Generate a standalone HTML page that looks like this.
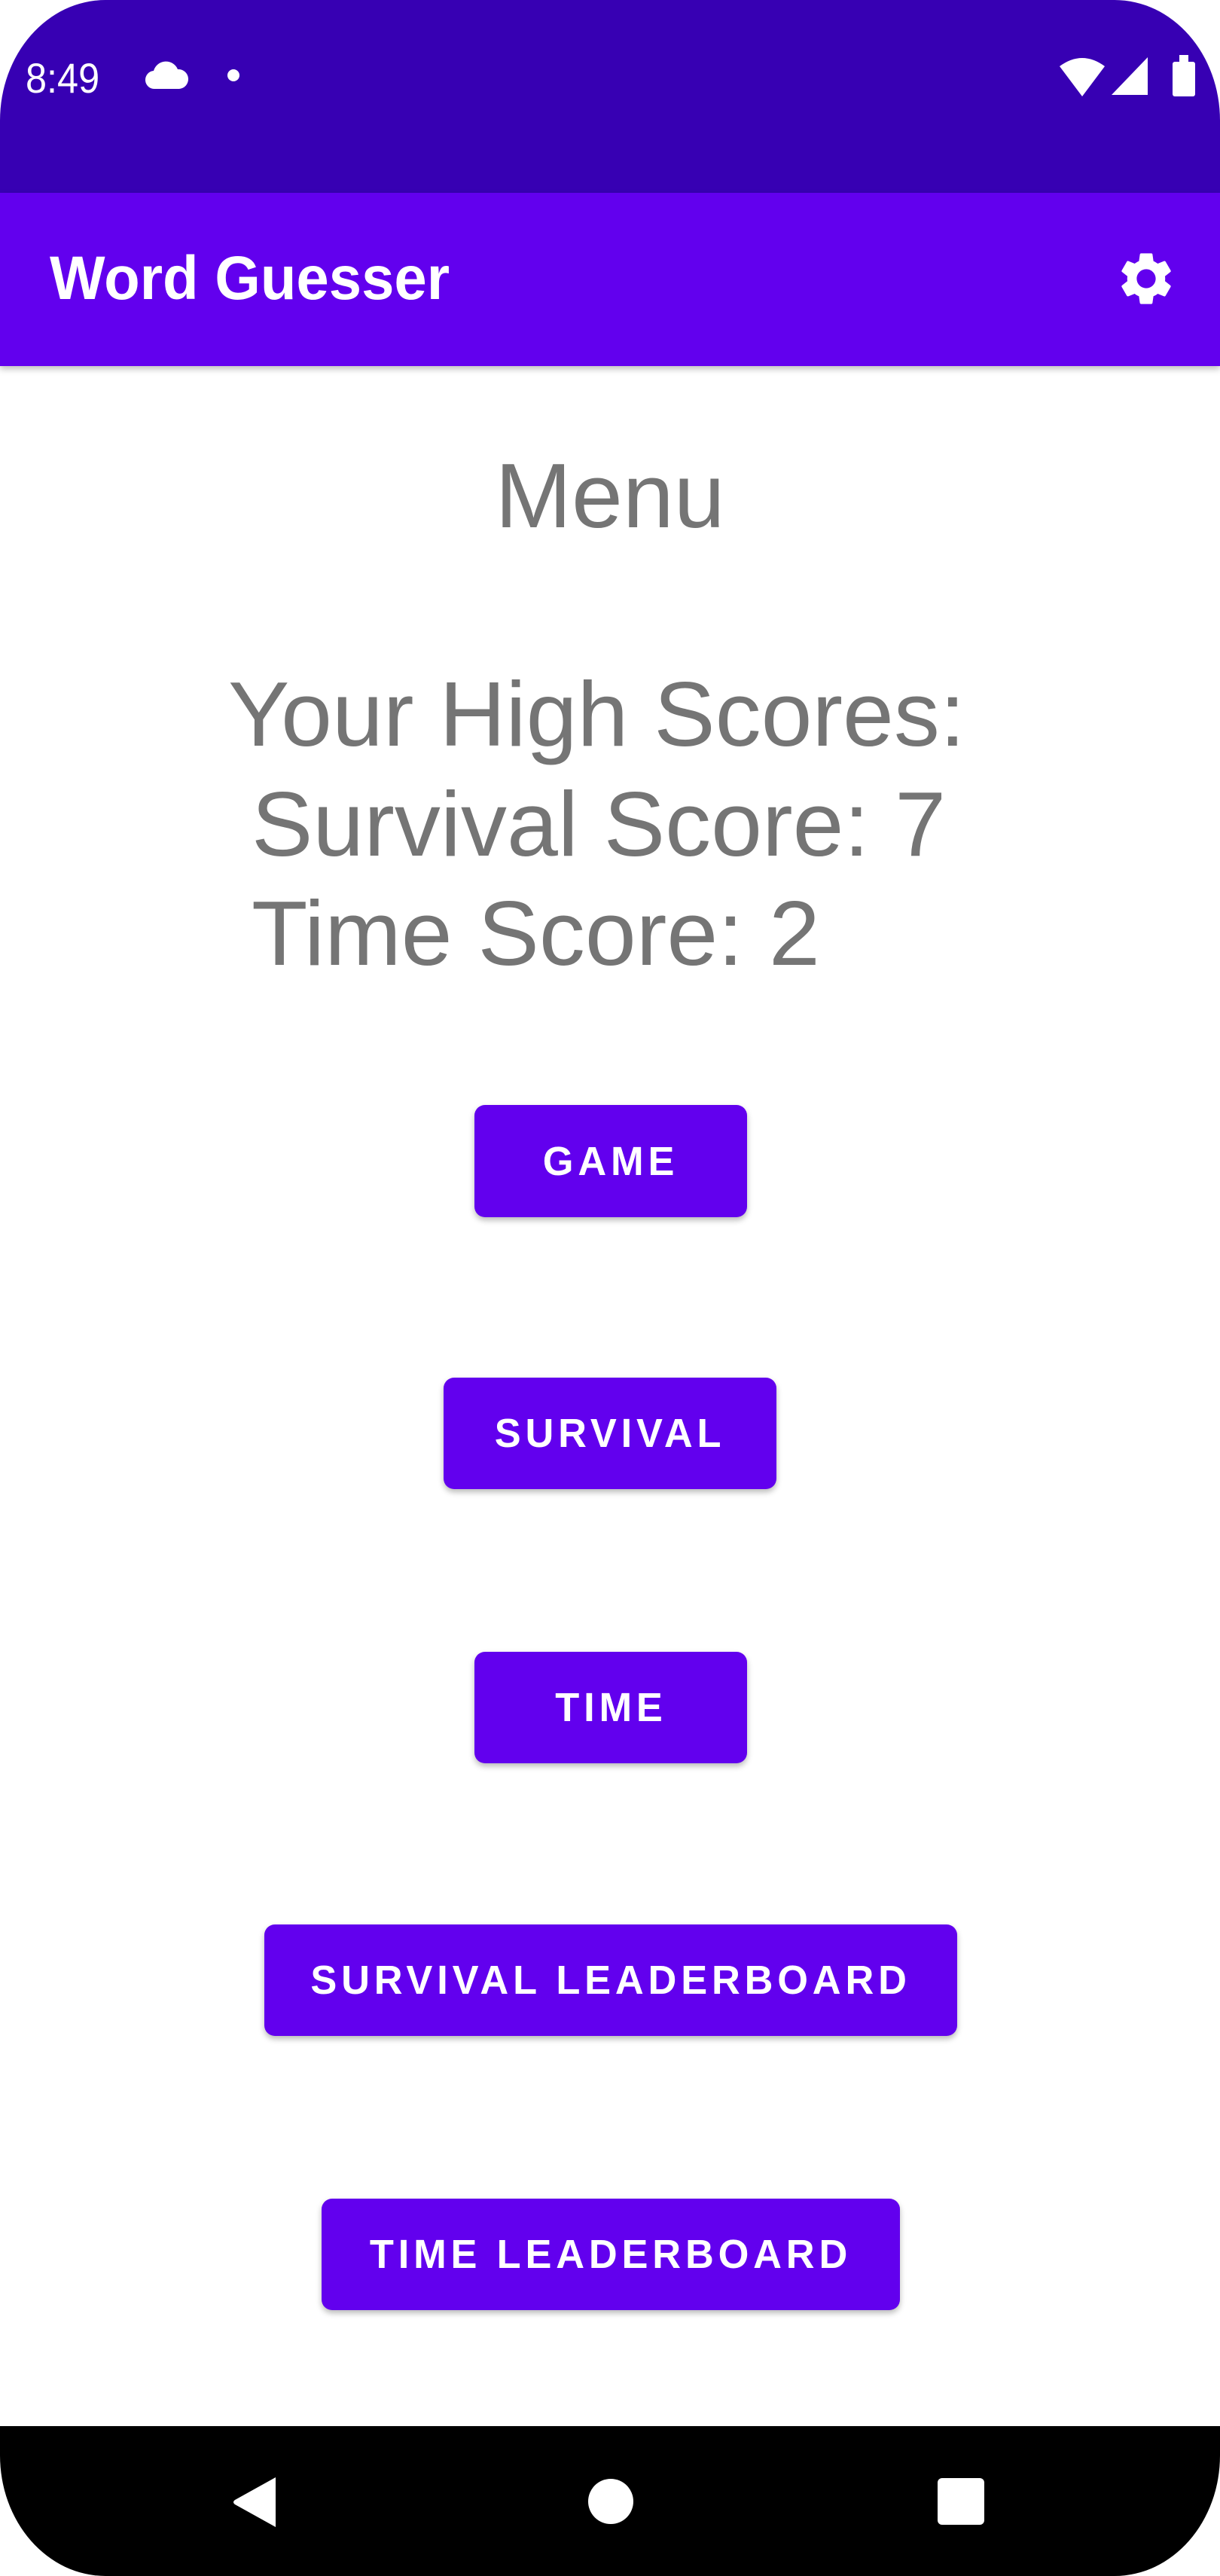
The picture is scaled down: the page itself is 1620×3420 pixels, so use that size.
<!DOCTYPE html>
<html><head><meta charset="utf-8"><style>
html,body{margin:0;padding:0;}
body{width:1620px;height:3420px;position:relative;overflow:hidden;background:#fff;font-family:"Liberation Sans",sans-serif;}
.frame{position:absolute;left:0;top:0;width:1620px;height:3420px;overflow:hidden;border-radius:140px 140px 140px 140px/160px 160px 160px 160px;background:#fff;}
.status{position:absolute;left:0;top:0;width:1620px;height:256px;background:#3700B3;}
.appbar{position:absolute;left:0;top:256px;width:1620px;height:230px;background:#6200EE;box-shadow:0 4px 8px rgba(0,0,0,0.25);}
.title{position:absolute;left:66px;color:#fff;font-size:82px;font-weight:bold;line-height:100px;transform:scaleX(0.95);transform-origin:left;}
.t{position:absolute;color:#757575;font-size:122px;line-height:140px;white-space:nowrap;}
.btn{position:absolute;background:#6200EE;border-radius:14px;box-shadow:0 4px 8px rgba(0,0,0,0.28);color:#fff;font-size:54px;font-weight:bold;letter-spacing:6px;display:flex;align-items:center;justify-content:center;}
.btn span{display:inline-block;transform:scaleX(0.97);}
.nav{position:absolute;left:0;top:3221px;width:1620px;height:199px;background:#000;}
</style></head><body>
<div class="frame">
<div class="status">
 <div style="position:absolute;left:34px;top:74px;color:#fff;font-size:56px;line-height:60px;transform:scaleX(0.9);transform-origin:left;">8:49</div>
 <svg style="position:absolute;left:192px;top:80px" width="60" height="40" viewBox="0 0 60 40"><path d="M14 38 A12 12 0 0 1 12 14 A17 17 0 0 1 44 12 A13 13 0 0 1 46 38 Z" fill="#fff"/></svg>
 <div style="position:absolute;left:302px;top:92px;width:16px;height:16px;border-radius:50%;background:#fff"></div>
 <svg style="position:absolute;left:1405px;top:74px" width="64" height="54" viewBox="0 0 64 54"><path d="M2 14 Q32 -8 62 14 L32 54 Z" fill="#fff"/></svg>
 <svg style="position:absolute;left:1474px;top:74px" width="52" height="54" viewBox="0 0 52 54"><path d="M50 2 L50 52 L2 52 Z" fill="#fff"/></svg>
 <div style="position:absolute;left:1557px;top:82px;width:30px;height:46px;background:#fff;border-radius:3px"></div>
 <div style="position:absolute;left:1566px;top:73px;width:12px;height:10px;background:#fff"></div>
</div>
<div class="appbar">
 <div class="title" style="top:64px">Word Guesser</div>
 <svg style="position:absolute;left:1480px;top:72px" width="84" height="84" viewBox="0 0 24 24"><path fill="#fff" d="M19.14 12.94c.04-.3.06-.61.06-.94 0-.32-.02-.64-.07-.94l2.03-1.58a.49.49 0 0 0 .12-.61l-1.92-3.32a.49.49 0 0 0-.59-.22l-2.39.96c-.5-.38-1.03-.7-1.62-.94l-.36-2.54a.48.48 0 0 0-.48-.41h-3.84c-.24 0-.43.17-.47.41l-.36 2.54c-.59.24-1.13.57-1.62.94l-2.39-.96c-.22-.08-.47 0-.59.22L2.74 8.87c-.12.21-.08.47.12.61l2.03 1.58c-.05.3-.09.63-.09.94s.02.64.07.94l-2.03 1.58a.49.49 0 0 0-.12.61l1.92 3.32c.12.22.37.29.59.22l2.39-.96c.5.38 1.03.7 1.62.94l.36 2.54c.05.24.24.41.48.41h3.84c.24 0 .44-.17.47-.41l.36-2.54c.59-.24 1.13-.56 1.62-.94l2.39.96c.22.08.47 0 .59-.22l1.92-3.32c.12-.22.07-.47-.12-.61l-2.01-1.58zM12 15.6c-1.98 0-3.6-1.62-3.6-3.6s1.62-3.6 3.6-3.6 3.6 1.62 3.6 3.6-1.62 3.6-3.6 3.6z"/></svg>
</div>

<div class="t" style="left:0;width:1620px;text-align:center;top:588px;">Menu</div>
<div class="t" style="left:303px;top:878px;">Your High Scores:</div>
<div class="t" style="left:334px;top:1024px;">Survival Score: 7</div>
<div class="t" style="left:334px;top:1169px;">Time Score: 2</div>

<div class="btn" style="left:630px;top:1467px;width:362px;height:149px;"><span>GAME</span></div>
<div class="btn" style="left:589px;top:1829px;width:442px;height:148px;"><span>SURVIVAL</span></div>
<div class="btn" style="left:630px;top:2193px;width:362px;height:148px;"><span>TIME</span></div>
<div class="btn" style="left:351px;top:2555px;width:920px;height:148px;"><span>SURVIVAL LEADERBOARD</span></div>
<div class="btn" style="left:427px;top:2919px;width:768px;height:148px;"><span>TIME LEADERBOARD</span></div>

<div class="nav">
 <svg style="position:absolute;left:308px;top:66px" width="62" height="70" viewBox="0 0 62 70"><path d="M58 2 L58 68 L4 38 Q0 35 4 32 Z" fill="#fff"/></svg>
 <div style="position:absolute;left:781px;top:70px;width:60px;height:60px;border-radius:50%;background:#fff"></div>
 <div style="position:absolute;left:1245px;top:69px;width:62px;height:62px;border-radius:6px;background:#fff"></div>
</div>
</div>
</body></html>
